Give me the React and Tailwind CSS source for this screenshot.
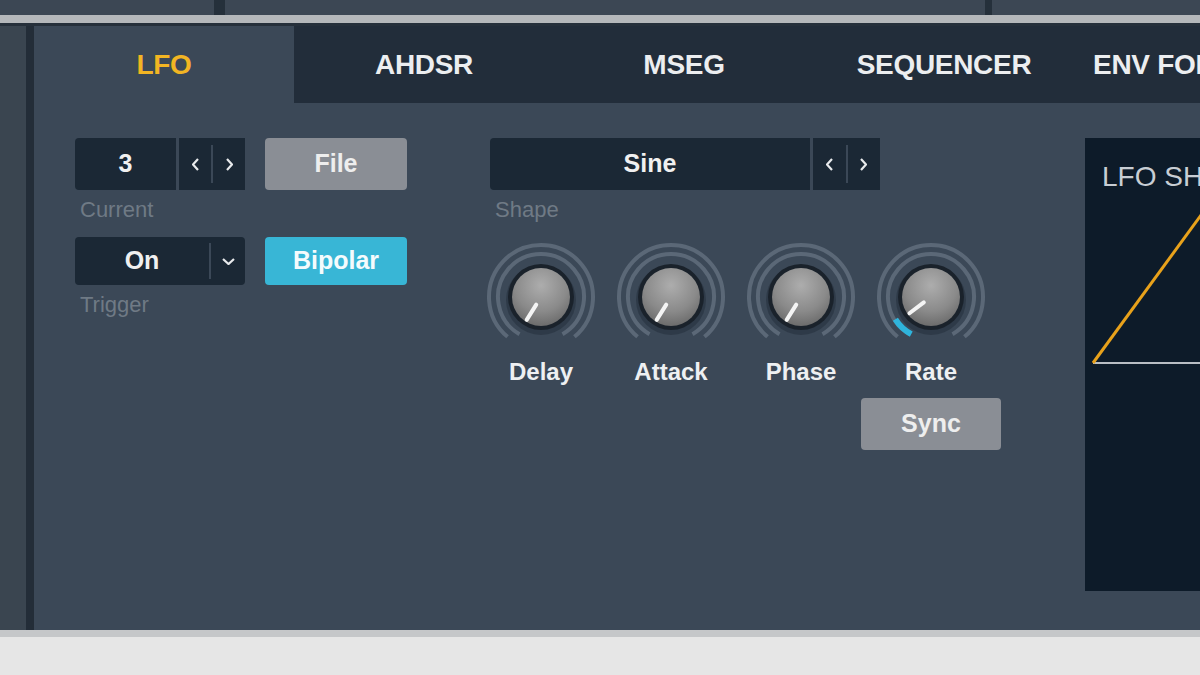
import { useId } from 'react';

// LFO tab of a synth modulation panel, zoomed crop.

const TABS = ['LFO', 'AHDSR', 'MSEG', 'SEQUENCER', 'ENV FOLLOWER'];

const KNOBS = [
  { label: 'Delay', angle: -148 },
  { label: 'Attack', angle: -148 },
  { label: 'Phase', angle: -148 },
  { label: 'Rate', angle: -127, value: [-152, -122] },
];

function arcPath(cx, cy, r, a1, a2) {
  const rad = (d) => (d * Math.PI) / 180;
  const x1 = cx + r * Math.sin(rad(a1));
  const y1 = cy - r * Math.cos(rad(a1));
  const x2 = cx + r * Math.sin(rad(a2));
  const y2 = cy - r * Math.cos(rad(a2));
  const large = a2 - a1 > 180 ? 1 : 0;
  return `M ${x1} ${y1} A ${r} ${r} 0 ${large} 1 ${x2} ${y2}`;
}

function Knob({ angle, value }) {
  const id = useId().replace(/:/g, '');
  const cx = 65;
  const cy = 57;
  const rad = (angle * Math.PI) / 180;
  const p = (r) => [cx + r * Math.sin(rad), cy - r * Math.cos(rad)];
  const [x1, y1] = p(9);
  const [x2, y2] = p(27);
  return (
    <svg width="130" height="116" viewBox="0 0 130 116">
      <defs>
        <radialGradient id={`g${id}`} cx="50%" cy="30%" r="75%">
          <stop offset="0%" stopColor="#adadad" />
          <stop offset="60%" stopColor="#8a8a8a" />
          <stop offset="100%" stopColor="#666666" />
        </radialGradient>
      </defs>
      <path d={arcPath(cx, cy, 52, -140, 140)} fill="none" stroke="#5b6877" strokeWidth="4" />
      <path d={arcPath(cx, cy, 43, -150, 150)} fill="none" stroke="#5b6877" strokeWidth="4" />
      {value && (
        <path d={arcPath(cx, cy, 42, value[0], value[1])} fill="none" stroke="#2fb4dc" strokeWidth="6" />
      )}
      <circle cx={cx} cy={cy + 3} r="35" fill="#2a3541" opacity="0.7" />
      <circle cx={cx} cy={cy} r="33" fill="#1a222b" />
      <circle cx={cx} cy={cy} r="29" fill={`url(#g${id})`} />
      <line x1={x1} y1={y1} x2={x2} y2={y2} stroke="#f4f4f4" strokeWidth="4" strokeLinecap="round" />
    </svg>
  );
}

function Chevron({ dir }) {
  const pts = dir === 'left' ? '6,1 1,6.5 6,12' : dir === 'right' ? '1,1 6,6.5 1,12' : '1,1 6.5,6 12,1';
  const w = dir === 'down' ? 13 : 7;
  const h = dir === 'down' ? 7 : 13;
  return (
    <svg width={w} height={h} viewBox={`0 0 ${w} ${h}`}>
      <polyline points={pts} fill="none" stroke="#e8eaec" strokeWidth="2.2" />
    </svg>
  );
}

function Stepper({ w }) {
  return (
    <div className={`${w} h-full bg-[#1b2835] flex items-center`}>
      <div className="flex-1 flex justify-center"><Chevron dir="left" /></div>
      <div className="w-[2px] h-[38px] bg-[#3b4857]" />
      <div className="flex-1 flex justify-center"><Chevron dir="right" /></div>
    </div>
  );
}

export default function App() {
  return (
    <div className="w-[1200px] h-[675px] overflow-hidden bg-[#e6e6e6] flex flex-col font-['Liberation_Sans',Arial,sans-serif]">
      {/* top strip */}
      <div className="h-[15px] shrink-0 flex bg-[#3c4754]">
        <div className="w-[214px]" />
        <div className="w-[11px] bg-[#25303b]" />
        <div className="w-[760px]" />
        <div className="w-[7px] bg-[#25303b]" />
      </div>
      <div className="h-[8px] shrink-0 bg-[#b5b8bb]" />
      <div className="h-[3px] shrink-0 bg-[#26303b]" />

      <div className="h-[604px] shrink-0 flex">
        <div className="w-[26px] shrink-0 bg-[#3a4550]" />
        <div className="w-[8px] shrink-0 bg-[#232d38]" />
        <div className="flex-1 min-w-0 bg-[#3b4857] flex flex-col">
          {/* tabs */}
          <div className="h-[77px] shrink-0 flex bg-[#222d3a]">
            {TABS.map((t, i) => (
              <div
                key={t}
                className={`w-[260px] shrink-0 flex items-center justify-center text-[28px] font-bold tracking-[-0.3px] whitespace-nowrap ${
                  i === 0 ? 'bg-[#3b4857] text-[#f2b523]' : 'text-[#eceef0]'
                }`}
              >
                {t}
              </div>
            ))}
          </div>

          <div className="flex pl-[41px] pt-[35px]">
            {/* left column */}
            <div className="w-[332px] shrink-0 flex flex-col">
              <div className="h-[52px] flex">
                <div className="w-[101px] h-full rounded-l-[4px] bg-[#1b2835] flex items-center justify-center text-[25px] font-bold text-[#f0f0f0]">3</div>
                <div className="w-[3px]" />
                <Stepper w="w-[66px]" />
                <div className="w-[20px]" />
                <div className="w-[142px] h-full rounded-[4px] bg-[#8a8e95] flex items-center justify-center text-[25px] font-bold text-[#eeeeee]">File</div>
              </div>
              <div className="mt-[8px] ml-[5px] leading-[24px] text-[22px] text-[#6f7a85]">Current</div>
              <div className="mt-[15px] h-[48px] flex">
                <div className="w-[170px] h-full rounded-[4px] bg-[#1b2835] flex items-center">
                  <div className="w-[134px] flex justify-center text-[25px] font-bold text-[#f0f0f0]">On</div>
                  <div className="w-[2px] h-[36px] bg-[#3b4857]" />
                  <div className="flex-1 flex justify-center"><Chevron dir="down" /></div>
                </div>
                <div className="w-[20px]" />
                <div className="w-[142px] h-full rounded-[4px] bg-[#38b6d6] flex items-center justify-center text-[25px] font-bold text-[#f4fbfd]">Bipolar</div>
              </div>
              <div className="mt-[8px] ml-[5px] leading-[24px] text-[22px] text-[#6f7a85]">Trigger</div>
            </div>

            {/* shape + knobs */}
            <div className="ml-[69px] w-[520px] shrink-0 flex flex-col">
              <div className="ml-[14px] h-[52px] flex">
                <div className="w-[320px] h-full rounded-l-[4px] bg-[#1b2835] flex items-center justify-center text-[25px] font-bold text-[#f0f0f0]">Sine</div>
                <div className="w-[3px]" />
                <Stepper w="w-[67px]" />
              </div>
              <div className="mt-[8px] ml-[19px] leading-[24px] text-[22px] text-[#6f7a85]">Shape</div>
              <div className="mt-[18px] flex">
                {KNOBS.map((k) => (
                  <div key={k.label} className="w-[130px] flex flex-col items-center">
                    <Knob angle={k.angle} value={k.value} />
                    <div className="mt-[2px] leading-[28px] text-[24px] font-bold text-[#eef0f2]">{k.label}</div>
                    {k.label === 'Rate' && (
                      <div className="mt-[12px] w-[140px] h-[52px] rounded-[4px] bg-[#8a8e95] flex items-center justify-center text-[25px] font-bold text-[#eeeeee]">
                        Sync
                      </div>
                    )}
                  </div>
                ))}
              </div>
            </div>

            {/* LFO shape preview */}
            <div className="ml-[89px] w-[300px] h-[453px] shrink-0 bg-[#0d1b29] flex flex-col">
              <div className="pl-[17px] pt-[24px] leading-[30px] text-[28px] text-[#c8ced4] whitespace-nowrap">LFO SHAPE</div>
              <svg width="300" height="300" viewBox="0 0 300 300" className="mt-[1px]">
                <line x1="8" y1="170" x2="300" y2="170" stroke="#b9bec4" strokeWidth="2" />
                <polyline points="8,170 130,3" fill="none" stroke="#e8a21b" strokeWidth="3" />
              </svg>
            </div>
          </div>
        </div>
      </div>

      <div className="h-[7px] shrink-0 bg-[#c5c7c9]" />
    </div>
  );
}
